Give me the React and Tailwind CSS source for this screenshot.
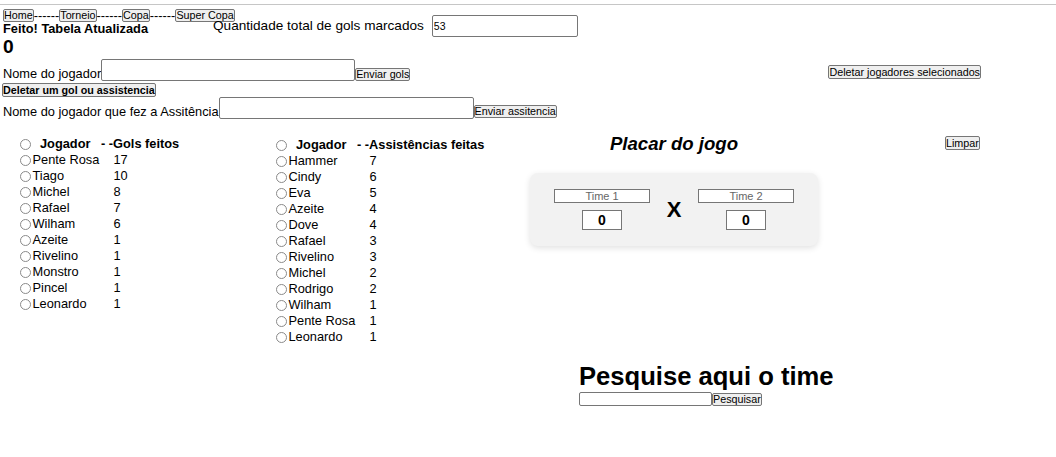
import React from 'react'

const golsFeitos = [
  ['Pente Rosa', 17], ['Tiago', 10], ['Michel', 8], ['Rafael', 7], ['Wilham', 6],
  ['Azeite', 1], ['Rivelino', 1], ['Monstro', 1], ['Pincel', 1], ['Leonardo', 1],
]

const assistencias = [
  ['Hammer', 7], ['Cindy', 6], ['Eva', 5], ['Azeite', 4], ['Dove', 4], ['Rafael', 3],
  ['Rivelino', 3], ['Michel', 2], ['Rodrigo', 2], ['Wilham', 1], ['Pente Rosa', 1], ['Leonardo', 1],
]

function Btn({ children, className = '' }) {
  return (
    <button className={`shrink-0 bg-[#efefef] border border-[#767676] rounded-[2px] px-0 text-[10.75px] leading-[11px] text-black whitespace-nowrap ${className}`}>
      {children}
    </button>
  )
}

function Radio() {
  return <span className="inline-block shrink-0 w-[11px] h-[11px] rounded-full border border-[#8a8a8a] bg-white" />
}

function Lista({ titulo, linhas, className = '' }) {
  return (
    <div className={className}>
      <div className="flex items-center h-[16px] font-bold">
        <Radio />
        <span className="ml-[9px] w-[61px]">Jogador</span>
        <span>- -{titulo}</span>
      </div>
      {linhas.map(([nome, n]) => (
        <div key={nome} className="flex items-center h-[16px]">
          <Radio />
          <span className="ml-[1.5px] w-[81px]">{nome}</span>
          <span>{n}</span>
        </div>
      ))}
    </div>
  )
}

export default function App() {
  return (
    <div className="w-[1056px] h-[457px] bg-white text-black text-[12.8px] font-['Liberation_Sans',Arial,sans-serif] overflow-hidden">
      <div className="h-[4px]" />
      <div className="border-t border-[#c6c6c6]" />

      {/* navegação */}
      <div className="flex items-center h-[13px] mt-[4px] pl-[3px]">
        <Btn>Home</Btn><span>------</span>
        <Btn>Torneio</Btn><span>------</span>
        <Btn>Copa</Btn><span>------</span>
        <Btn>Super Copa</Btn>
      </div>

      <div className="flex items-start pl-[3px]">
        <div className="w-[210px]">
          <div className="font-bold leading-[14px]">Feito! Tabela Atualizada</div>
          <div className="font-bold text-[19.2px] leading-[22px]">0</div>
        </div>
        <div className="flex items-center -mt-[7px]">
          <span className="text-[13.6px]">Quantidade total de gols marcados</span>
          <input
            readOnly
            value="53"
            className="ml-[8px] w-[146px] h-[22px] border border-[#767676] rounded-[2px] px-[1px] text-[10.5px] outline-none"
          />
        </div>
      </div>

      {/* gols */}
      <div className="flex items-end mt-[1px] pl-[3px] w-[981px]">
        <span className="leading-[15px]">Nome do jogador</span>
        <input className="w-[254px] h-[22px] border border-[#767676] rounded-[2px] outline-none" />
        <Btn>Enviar gols</Btn>
        <Btn className="ml-auto self-start mt-[6px] leading-[12px]">Deletar jogadores selecionados</Btn>
      </div>

      <div className="flex pl-[2px] mt-[2px]">
        <Btn className="font-bold leading-[12px]">Deletar um gol ou assistencia</Btn>
      </div>

      <div className="flex items-end pl-[3px]">
        <span className="leading-[15px]">Nome do jogador que fez a Assitência</span>
        <input className="w-[255px] h-[22px] border border-[#767676] rounded-[2px] outline-none" />
        <Btn className="mb-[1px]">Enviar assitencia</Btn>
      </div>

      {/* tabelas e placar */}
      <div className="flex items-start mt-[14px]">
        <Lista titulo="Gols feitos" linhas={golsFeitos} className="ml-[20px] w-[256px] mt-[3px]" />
        <Lista titulo="Assistências feitas" linhas={assistencias} className="w-[254px] mt-[4px]" />

        <div className="w-[288px] flex flex-col items-center">
          <h2 className="font-bold italic text-[18.6px] leading-[22px]">Placar do jogo</h2>
          <div className="mt-[18px] w-[288px] flex items-center px-[24px] py-[16px] bg-[#f2f2f2] rounded-[8px] shadow-[0_2px_6px_rgba(0,0,0,0.12)]">
            <div className="flex flex-col items-center w-[96px]">
              <div className="w-[96px] h-[14px] border border-[#767676] bg-white text-center text-[11px] leading-[12px] text-[#666666]">Time 1</div>
              <div className="mt-[7px] w-[40px] h-[20px] border border-[#767676] bg-white text-center font-bold text-[14px] leading-[18px]">0</div>
            </div>
            <div className="w-[48px] text-center font-bold text-[22px] leading-[24px]">X</div>
            <div className="flex flex-col items-center w-[96px]">
              <div className="w-[96px] h-[14px] border border-[#767676] bg-white text-center text-[11px] leading-[12px] text-[#666666]">Time 2</div>
              <div className="mt-[7px] w-[40px] h-[20px] border border-[#767676] bg-white text-center font-bold text-[14px] leading-[18px]">0</div>
            </div>
          </div>
        </div>

        <Btn className="ml-[127px] mt-[3px] leading-[12px]">Limpar</Btn>
      </div>

      {/* pesquisa */}
      <div className="ml-[579px] mt-[16px]">
        <h1 className="font-bold text-[25.6px] leading-[30px]">Pesquise aqui o time</h1>
        <div className="flex items-end mt-[1px]">
          <input className="w-[133px] h-[14px] border border-[#767676] rounded-[2px] outline-none" />
          <Btn>Pesquisar</Btn>
        </div>
      </div>
    </div>
  )
}
